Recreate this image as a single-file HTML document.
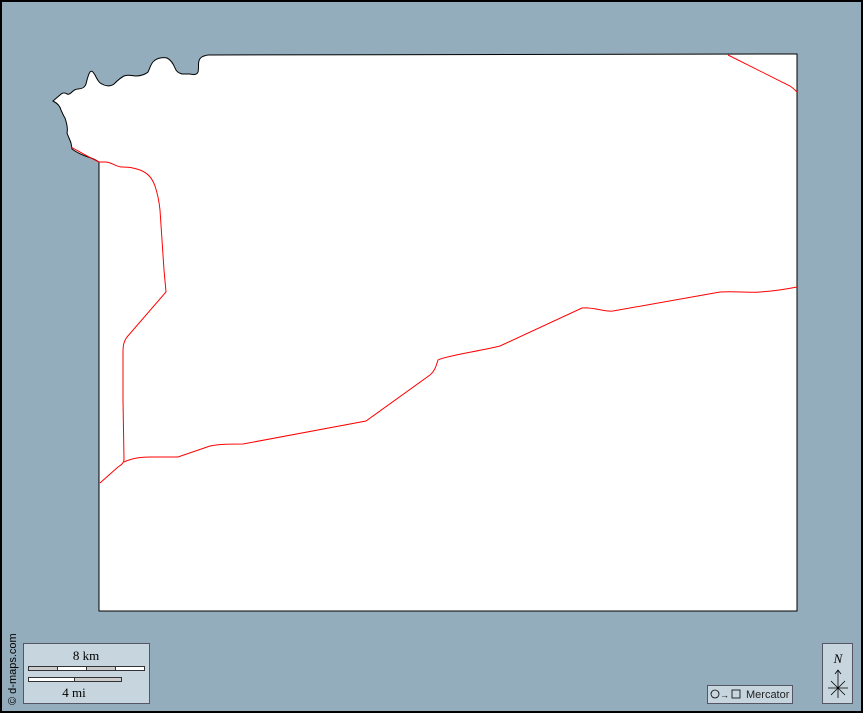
<!DOCTYPE html>
<html><head><style>
html,body{margin:0;padding:0;width:863px;height:713px;overflow:hidden;background:#000}
</style></head><body>
<svg width="863" height="713" xmlns="http://www.w3.org/2000/svg" style="display:block">
<rect x="0" y="0" width="863" height="713" fill="#000"/>
<rect x="2" y="2" width="859" height="709" fill="#94adbc"/>
<path d="M99,162 C96,160 92,158 88,157 C82,155 76,152 72,149 L71,143 C70,140 68,136 67,133 C68,129 67,124 65,118 C63,115 62,112 61,110 C60,106 57,103 53,101 L60,95 C62,93 64,92 67,94 C69,95 71,93 72,92 C74,90 76,89 78,89 C82,89 85,87 86,84 C87,80 88,75 90,72 C92,70 93,72 95,75 C97,79 99,83 102,84 C105,86 110,87 114,84 C117,81 120,78 124,76 C128,74 132,76 136,76 C141,76 146,74 148,72 C150,68 151,63 154,61 C157,58 163,57 167,58 C171,60 173,63 175,68 C176,71 178,73 182,74 L190,74 C194,75 197,75 198,72 C199,68 198,63 199,61 C200,57 203,56 208,55 L797,54 L797,611 L99,611 Z" fill="#fff" stroke="#000" stroke-width="1"/>
<g fill="none" stroke="#f00" stroke-width="1">
<path d="M71,147 C80,152 90,158 99,162 L105,162 C112,162 116,167 122,167 C130,167 133,168 140,170 C148,173 152,178 155,186 C157,192 159,200 160,210 L162,240 L164,270 L166,292 L127,337 C124,341 123,345 123,352 L123,400 L124,460 C123,464 121,465 118,467 L100,483"/>
<path d="M124,462 C132,458 140,457 150,457 L178,457 L210,446 C220,444 230,444 243,444 L366,421 L430,375 C435,371 436,366 438,360 C445,356 480,351 500,346 L582,308 C595,307 603,312 613,311 L720,292 C735,291 750,293 760,292 C775,291 787,289 797,287"/>
<path d="M728,55 L790,86 C793,88 795,90 797,92"/>
</g>
<text transform="translate(16,705) rotate(-90)" font-family="Liberation Sans, sans-serif" font-size="11" fill="#000">© d-maps.com</text>
<rect x="23.5" y="643.5" width="126" height="60" fill="#c6d5de" stroke="#556" stroke-width="1"/>
<text x="86" y="660" text-anchor="middle" font-family="Liberation Serif, serif" font-size="13">8 km</text>
<rect x="28.5" y="666.5" width="116" height="4" fill="#fff" stroke="#333" stroke-width="1"/>
<rect x="28.5" y="666.5" width="29" height="4" fill="#ccc" stroke="#333" stroke-width="1"/>
<rect x="86.5" y="666.5" width="29" height="4" fill="#ccc" stroke="#333" stroke-width="1"/>
<rect x="28.5" y="677.5" width="93" height="4" fill="#ccc" stroke="#333" stroke-width="1"/>
<rect x="28.5" y="677.5" width="46" height="4" fill="#fff" stroke="#333" stroke-width="1"/>
<text x="74" y="697" text-anchor="middle" font-family="Liberation Serif, serif" font-size="13">4 mi</text>
<rect x="707.5" y="685.5" width="85" height="18" fill="#c6d5de" stroke="#556" stroke-width="1"/>
<circle cx="715" cy="694" r="4" fill="none" stroke="#000" stroke-width="0.8"/>
<text x="720" y="698" font-family="Liberation Sans, sans-serif" font-size="9">→</text>
<rect x="732" y="690" width="8" height="8" fill="none" stroke="#000" stroke-width="0.8"/>
<text x="746" y="698" font-family="Liberation Sans, sans-serif" font-size="11" fill="#222">Mercator</text>
<rect x="822.5" y="643.5" width="30" height="60" fill="#c6d5de" stroke="#556" stroke-width="1"/>
<text x="838" y="663" text-anchor="middle" font-family="Liberation Serif, serif" font-style="italic" font-size="13">N</text>
<g stroke="#000" stroke-width="0.8" fill="none">
<path d="M838,698 L838,670 M835,674 L838,670 L841,674 M828,688 L848,688 M831,681 L845,695 M845,681 L831,695"/>
</g>
</svg>
</body></html>
